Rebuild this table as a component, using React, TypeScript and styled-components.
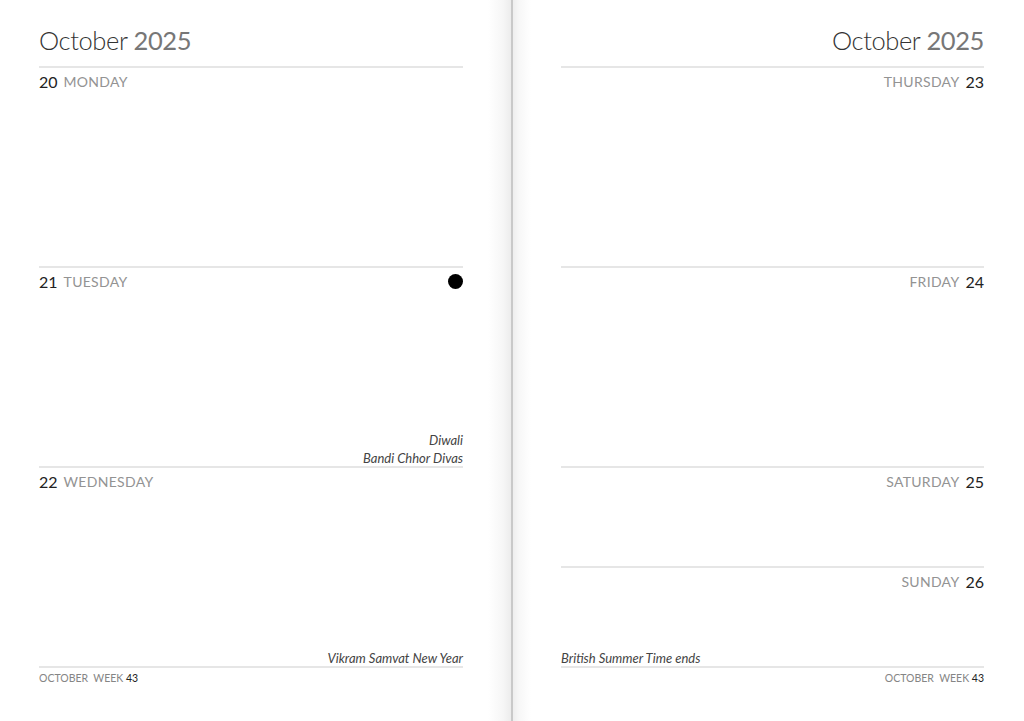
import React from "react";
import styled, { createGlobalStyle } from "styled-components";

const Global = createGlobalStyle`
  html, body { margin: 0; padding: 0; background: #fff; }
  body { font-family: "Lato", "Noto Sans", sans-serif; }
  * { box-sizing: border-box; }
`;

const Spread = styled.div`
  display: flex;
  width: 1024px;
  height: 721px;
  overflow: hidden;
  background: #fff;
`;

const Page = styled.div<{ $side: "left" | "right" }>`
  width: 511px;
  display: flex;
  flex-direction: column;
  padding: ${(p) => (p.$side === "left" ? "0 48px 0 39px" : "0 40px 0 48px")};
  background: ${(p) =>
    p.$side === "left"
      ? "linear-gradient(to right, #fff 0, #fff 488px, #f6f6f6 503px, #ececec 511px)"
      : "linear-gradient(to right, #eeeeee 0, #f7f7f7 6px, #fff 18px, #fff 100%)"};
`;

const Gutter = styled.div`
  width: 2px;
  background: #c9c9c9;
  flex: none;
`;

const Title = styled.div<{ $align: "left" | "right" }>`
  height: 66px;
  padding-top: 23px;
  text-align: ${(p) => p.$align};
  font-size: 25.5px;
  font-weight: 300;
  color: #333;
  line-height: 34px;
  letter-spacing: -0.4px;
`;

const Year = styled.span`
  color: #777;
  font-weight: 400;
`;

const Day = styled.div<{ $h: number }>`
  height: ${(p) => p.$h}px;
  border-top: 2px solid #e6e6e6;
  display: flex;
  flex-direction: column;
`;

const DayHead = styled.div<{ $align: "left" | "right" }>`
  display: flex;
  align-items: center;
  justify-content: ${(p) => (p.$align === "left" ? "flex-start" : "flex-end")};
  gap: 6px;
  height: 26px;
`;

const DayNum = styled.span`
  font-size: 16px;
  color: #222;
  font-weight: 400;
`;

const DayName = styled.span`
  font-size: 14px;
  color: #939393;
  font-weight: 400;
  letter-spacing: 0.3px;
`;

const Dot = styled.span`
  margin-left: auto;
  width: 15px;
  height: 15px;
  border-radius: 50%;
  background: #000;
`;

const Notes = styled.div<{ $align: "left" | "right" }>`
  margin-top: auto;
  margin-bottom: -1px;
  display: flex;
  flex-direction: column;
  align-items: ${(p) => (p.$align === "left" ? "flex-start" : "flex-end")};
`;

const Note = styled.div`
  font-size: 13px;
  font-style: italic;
  color: #444;
  line-height: 18px;
`;

const Footer = styled.div<{ $align: "left" | "right" }>`
  border-top: 2px solid #e6e6e6;
  padding-top: 4px;
  text-align: ${(p) => p.$align};
  font-size: 10.5px;
  color: #858585;
  white-space: pre;
`;

const WeekNum = styled.span`
  color: #222;
`;

type DayData = {
  num: number;
  name: string;
  h: number;
  dot?: boolean;
  notes?: string[];
};

const leftDays: DayData[] = [
  { num: 20, name: "MONDAY", h: 200 },
  { num: 21, name: "TUESDAY", h: 200, dot: true, notes: ["Diwali", "Bandi Chhor Divas"] },
  { num: 22, name: "WEDNESDAY", h: 200, notes: ["Vikram Samvat New Year"] },
];

const rightDays: DayData[] = [
  { num: 23, name: "THURSDAY", h: 200 },
  { num: 24, name: "FRIDAY", h: 200 },
  { num: 25, name: "SATURDAY", h: 100 },
  { num: 26, name: "SUNDAY", h: 100, notes: ["British Summer Time ends"] },
];

const DiaryPage = ({ side, days }: { side: "left" | "right"; days: DayData[] }) => {
  const align = side;
  const noteAlign = side === "left" ? "right" : "left";
  return (
    <Page $side={side}>
      <Title $align={align}>
        October <Year>2025</Year>
      </Title>
      {days.map((d) => (
        <Day key={d.num} $h={d.h}>
          <DayHead $align={align}>
            {side === "left" ? (
              <>
                <DayNum>{d.num}</DayNum>
                <DayName>{d.name}</DayName>
                {d.dot && <Dot />}
              </>
            ) : (
              <>
                <DayName>{d.name}</DayName>
                <DayNum>{d.num}</DayNum>
              </>
            )}
          </DayHead>
          {d.notes && (
            <Notes $align={noteAlign}>
              {d.notes.map((n) => (
                <Note key={n}>{n}</Note>
              ))}
            </Notes>
          )}
        </Day>
      ))}
      <Footer $align={align}>
        {"OCTOBER  WEEK "}
        <WeekNum>43</WeekNum>
      </Footer>
    </Page>
  );
};

export default function App() {
  return (
    <>
      <Global />
      <Spread>
        <DiaryPage side="left" days={leftDays} />
        <Gutter />
        <DiaryPage side="right" days={rightDays} />
      </Spread>
    </>
  );
}
